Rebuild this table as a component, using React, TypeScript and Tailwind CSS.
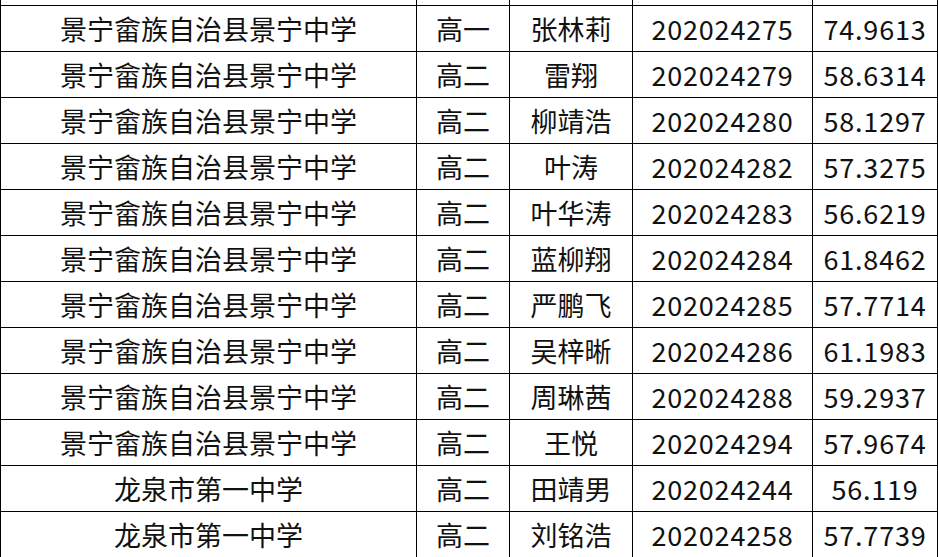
const rows: [string, string, string, string, string][] = [
  ['景宁畲族自治县景宁中学', '高一', '张林莉', '202024275', '74.9613'],
  ['景宁畲族自治县景宁中学', '高二', '雷翔', '202024279', '58.6314'],
  ['景宁畲族自治县景宁中学', '高二', '柳靖浩', '202024280', '58.1297'],
  ['景宁畲族自治县景宁中学', '高二', '叶涛', '202024282', '57.3275'],
  ['景宁畲族自治县景宁中学', '高二', '叶华涛', '202024283', '56.6219'],
  ['景宁畲族自治县景宁中学', '高二', '蓝柳翔', '202024284', '61.8462'],
  ['景宁畲族自治县景宁中学', '高二', '严鹏飞', '202024285', '57.7714'],
  ['景宁畲族自治县景宁中学', '高二', '吴梓晰', '202024286', '61.1983'],
  ['景宁畲族自治县景宁中学', '高二', '周琳茜', '202024288', '59.2937'],
  ['景宁畲族自治县景宁中学', '高二', '王悦', '202024294', '57.9674'],
  ['龙泉市第一中学', '高二', '田靖男', '202024244', '56.119'],
  ['龙泉市第一中学', '高二', '刘铭浩', '202024258', '57.7739'],
];

const cols = 'grid grid-cols-[416px_93px_123px_180px_125px]';

export default function App() {
  return (
    <div
      className="w-[938px] h-[557px] overflow-hidden bg-white text-[#111]"
      style={{ fontFamily: '"Noto Sans CJK SC", "Noto Sans", sans-serif' }}
    >
      <div className="border-l border-black">
        {/* row cut off at the top */}
        <div className={`${cols} h-[6px] border-b border-black`}>
          {[0, 1, 2, 3, 4].map((i) => (
            <div key={i} className="border-r border-black" />
          ))}
        </div>
        {rows.map((r, idx) => (
          <div key={idx} className={`${cols} h-[46px] border-b border-black`}>
            {r.map((cell, i) => (
              <div
                key={i}
                className={`flex items-center justify-center border-r border-black text-[27px] leading-none ${
                  i >= 3 ? 'tracking-[0.8px]' : ''
                }`}
              >
                {cell}
              </div>
            ))}
          </div>
        ))}
      </div>
    </div>
  );
}
